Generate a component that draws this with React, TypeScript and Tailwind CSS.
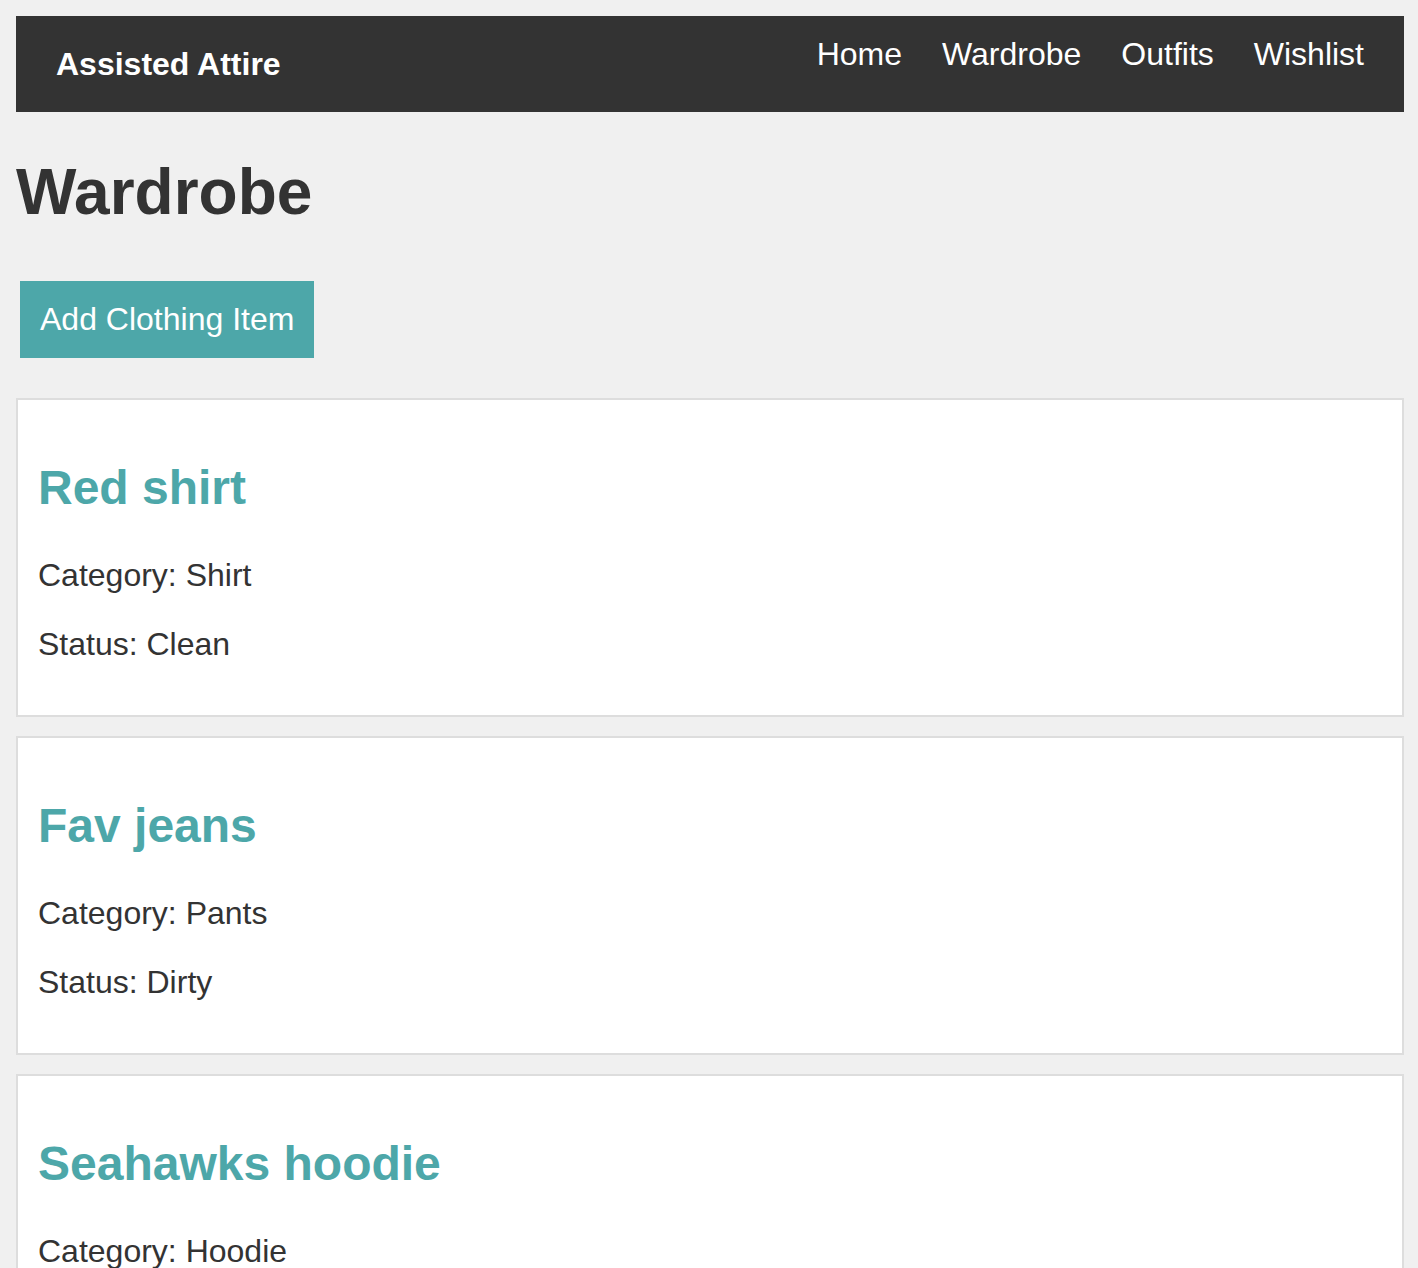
import React from "react";

const items = [
  { name: "Red shirt", category: "Shirt", status: "Clean" },
  { name: "Fav jeans", category: "Pants", status: "Dirty" },
  { name: "Seahawks hoodie", category: "Hoodie", status: "Clean" },
];

export default function App() {
  return (
    <div className="min-h-screen bg-[#f0f0f0] py-[16px] pl-[16px] pr-[14px] text-[#333333] [font-family:'Liberation_Sans',Arial,sans-serif]">
      <header className="flex h-[96px] items-start justify-between bg-[#333333] px-[40px] pt-[20px] text-white">
        <div className="mt-[10px] text-[32px] font-bold leading-[37px]">Assisted Attire</div>
        <nav className="flex gap-[40px] text-[32px] leading-[37px]">
          <a href="#">Home</a>
          <a href="#">Wardrobe</a>
          <a href="#">Outfits</a>
          <a href="#">Wishlist</a>
        </nav>
      </header>
      <h1 className="mt-[43px] mb-[52px] text-[64px] font-bold leading-[74px]">Wardrobe</h1>
      <button className="ml-[4px] bg-[#4da7a9] px-[20px] py-[20px] text-[32px] leading-[37px] text-white">
        Add Clothing Item
      </button>
      <div className="mt-[40px] flex flex-col gap-[19px]">
        {items.map((it) => (
          <div key={it.name} className="border-2 border-[#dddddd] bg-white p-[20px]">
            <h2 className="mt-[40px] mb-[42px] text-[48px] font-bold leading-[55px] text-[#4da7a9]">{it.name}</h2>
            <p className="mb-[32px] text-[32px] leading-[37px]">Category: {it.category}</p>
            <p className="mb-[32px] text-[32px] leading-[37px]">Status: {it.status}</p>
          </div>
        ))}
      </div>
    </div>
  );
}
